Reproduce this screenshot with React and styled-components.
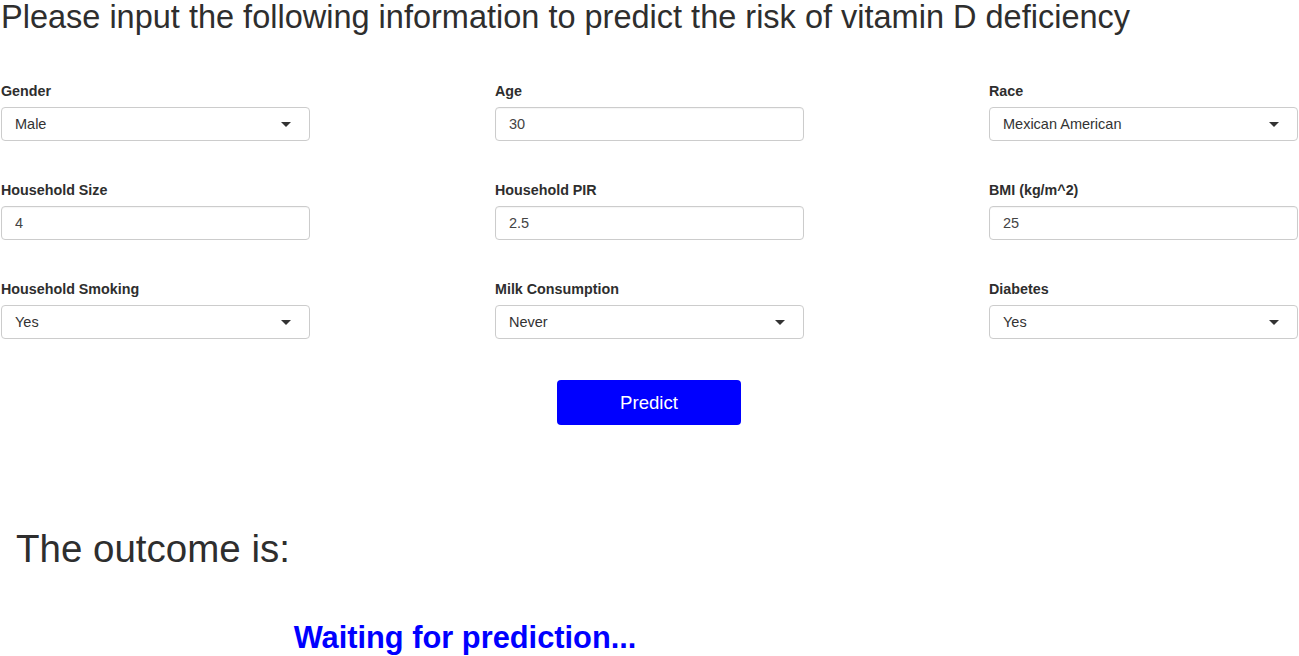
import React from "react";
import styled, { createGlobalStyle } from "styled-components";

const Global = createGlobalStyle`
  html, body { margin: 0; padding: 0; background: #fff; }
  body { font-family: "Liberation Sans", Arial, Helvetica, sans-serif; color: #333; }
  * { box-sizing: border-box; }
`;

const Page = styled.div`
  width: 1299px;
  height: 656px;
  overflow: hidden;
  display: flex;
  flex-direction: column;
`;

const Title = styled.h1`
  margin: 1px 0 0 1px;
  font-size: 32.5px;
  line-height: 32px;
  font-weight: 400;
  color: #2e2e2e;
  white-space: nowrap;
`;

const Form = styled.div`
  display: grid;
  grid-template-columns: repeat(3, 309px);
  column-gap: 185px;
  row-gap: 39px;
  margin: 48px 0 0 1px;
`;

const Field = styled.div`
  display: flex;
  flex-direction: column;
`;

const Label = styled.label`
  font-size: 14.3px;
  font-weight: 700;
  line-height: 20px;
  margin: 0 0 6px 0;
  color: #2e2e2e;
`;

const TextInput = styled.input`
  height: 34px;
  width: 100%;
  border: 1px solid #ccc;
  border-radius: 4px;
  padding: 0 13px;
  font-family: inherit;
  font-size: 14.5px;
  color: #444;
  background: #fff;
  box-shadow: inset 0 1px 1px rgba(0,0,0,0.04);
  outline: none;
`;

const SelectBox = styled.div`
  height: 34px;
  width: 100%;
  border: 1px solid #ccc;
  border-radius: 4px;
  padding: 0 16px 0 13px;
  display: flex;
  align-items: center;
  justify-content: space-between;
  font-size: 14.5px;
  color: #333;
  background: #fff;
  cursor: pointer;
`;

const Caret = styled.span`
  width: 0;
  height: 0;
  border-left: 5px solid transparent;
  border-right: 5px solid transparent;
  border-top: 5px solid #333;
  margin-right: 2px;
`;

const ButtonRow = styled.div`
  display: flex;
  justify-content: center;
  margin: 41px 0 0 0;
  padding-right: 1px;
`;

const PredictButton = styled.button`
  width: 184px;
  height: 45px;
  background: #0000ff;
  border: none;
  border-radius: 4px;
  color: #fff;
  font-family: inherit;
  font-size: 18.6px;
  cursor: pointer;
`;

const Outcome = styled.h2`
  margin: 105px 0 0 16px;
  font-size: 38.5px;
  line-height: 38px;
  font-weight: 400;
  color: #2e2e2e;
`;

const ResultBox = styled.div`
  width: 930px;
  margin-top: 55px;
  text-align: center;
`;

const Waiting = styled.span`
  font-size: 30.8px;
  line-height: 30px;
  font-weight: 700;
  color: #0000ff;
`;

const fields = [
  { label: "Gender", type: "select", value: "Male" },
  { label: "Age", type: "input", value: "30" },
  { label: "Race", type: "select", value: "Mexican American" },
  { label: "Household Size", type: "input", value: "4" },
  { label: "Household PIR", type: "input", value: "2.5" },
  { label: "BMI (kg/m^2)", type: "input", value: "25" },
  { label: "Household Smoking", type: "select", value: "Yes" },
  { label: "Milk Consumption", type: "select", value: "Never" },
  { label: "Diabetes", type: "select", value: "Yes" },
];

export default function App() {
  return (
    <>
      <Global />
      <Page>
        <Title>Please input the following information to predict the risk of vitamin D deficiency</Title>
        <Form>
          {fields.map((f) => (
            <Field key={f.label}>
              <Label>{f.label}</Label>
              {f.type === "select" ? (
                <SelectBox>
                  <span>{f.value}</span>
                  <Caret />
                </SelectBox>
              ) : (
                <TextInput defaultValue={f.value} />
              )}
            </Field>
          ))}
        </Form>
        <ButtonRow>
          <PredictButton>Predict</PredictButton>
        </ButtonRow>
        <Outcome>The outcome is:</Outcome>
        <ResultBox>
          <Waiting>Waiting for prediction...</Waiting>
        </ResultBox>
      </Page>
    </>
  );
}
